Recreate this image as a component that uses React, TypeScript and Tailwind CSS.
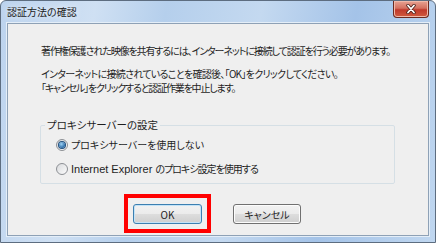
import type { ReactNode } from "react";

const jp = "font-['Noto_Sans_CJK_JP','Noto_Sans',sans-serif] [font-feature-settings:'palt']";

function Radio({ checked, children }: { checked?: boolean; children: ReactNode }) {
  return (
    <div className="flex h-[14px] items-center gap-[3px]">
      <span className="flex size-[12px] items-center justify-center rounded-full border border-[#8c8f94] bg-[linear-gradient(135deg,#d9dbdd,#fbfbfb)]">
        {checked && (
          <span className="size-[6px] rounded-full bg-[radial-gradient(circle_at_40%_35%,#9fd3f5,#2a6aa6_70%)] shadow-[0_0_0_1px_#1f4e7d]" />
        )}
      </span>
      <span className="whitespace-nowrap text-[10px] leading-[14px] text-[#1e1e1e]">{children}</span>
    </div>
  );
}

function WinButton({ isDefault, children }: { isDefault?: boolean; children: ReactNode }) {
  return (
    <button
      className={`flex h-[20px] w-full items-center justify-center rounded-[3px] border bg-[linear-gradient(#f2f2f2_0%,#ebebeb_50%,#dddddd_50%,#cfcfcf_100%)] text-[10px] text-[#1e1e1e] ${
        isDefault
          ? "border-[#3c7fb1] shadow-[inset_0_0_0_1px_#c3e3f7]"
          : "border-[#707070] shadow-[inset_0_0_0_1px_#fcfcfc]"
      }`}
      type="button"
    >
      {children}
    </button>
  );
}

function CloseButton() {
  return (
    <div className="flex h-[17px] w-[36px] items-center justify-center rounded-b-[4px] border border-t-0 border-[#6b2a20] bg-[linear-gradient(#e8a393_0%,#d4705f_45%,#c0392b_55%,#d05a3e_100%)] shadow-[inset_0_0_0_1px_#f0b8a8]">
      <svg viewBox="0 0 12 10" className="h-[10px] w-[12px]">
        <path d="M3 1.5 9 8.5M9 1.5 3 8.5" stroke="#4a1e17" strokeWidth="3.4" strokeLinecap="round" />
        <path d="M3 1.5 9 8.5M9 1.5 3 8.5" stroke="#ffffff" strokeWidth="1.8" strokeLinecap="round" />
      </svg>
    </div>
  );
}

export default function App() {
  return (
    <div
      className={`flex h-[243px] w-[436px] flex-col overflow-hidden rounded-t-[6px] border border-[#5d6d80] bg-[linear-gradient(100deg,#bcd3ee_0%,#cfe0f3_20%,#b5cfec_35%,#c4d9f0_55%,#a4c3e8_75%,#c0d7f0_100%)] ${jp}`}
    >
      <div className="flex h-[22px] shrink-0 items-start justify-between pl-[6px] pr-[6px]">
        <span className="pt-[4px] text-[10px] leading-[14px] text-[#1b1b1b] [text-shadow:0_0_6px_#ffffff]">
          認証方法の確認
        </span>
        <CloseButton />
      </div>
      <div className="mx-[6px] mb-[6px] flex flex-1 flex-col border border-[#8ea1b6] bg-[#efefef] shadow-[0_0_0_1px_#e4eef8]">
        <div className="whitespace-nowrap pl-[33px] pt-[20px] text-[10px] leading-[14px] text-[#1e1e1e]">
          <p className="tracking-[-1.1px]">著作権保護された映像を共有するには、インターネットに接続して認証を行う必要があります。</p>
          <p className="mt-[9px] tracking-[-0.7px]">インターネットに接続されていることを確認後、「OK」をクリックしてください。</p>
          <p className="tracking-[-1.2px]">「キャンセル」をクリックすると認証作業を中止します。</p>
        </div>
        <fieldset className="ml-[32px] mt-[23px] w-[355px] rounded-[2px] border border-[#d5dfe5] px-[4px] pb-[7px]">
          <legend className="px-[2px] text-[10.5px] leading-[14px] text-[#1e1e1e]">プロキシサーバーの設定</legend>
          <div className="ml-[11px] mt-[6px] flex flex-col gap-[10px]">
            <Radio checked>プロキシサーバーを使用しない</Radio>
            <Radio>
              <span className="font-['Liberation_Sans',sans-serif] text-[11px]">Internet Explorer </span>
              <span className="tracking-[-1px]">のプロキシ設定を使用する</span>
            </Radio>
          </div>
        </fieldset>
        <div className="ml-[125px] mt-[20px] flex gap-[31px]">
          <div className="relative w-[69px]">
            <WinButton isDefault>OK</WinButton>
            <div className="pointer-events-none absolute -inset-x-[9px] -bottom-[9px] -top-[10px] border-[4px] border-[#ff0000]" />
          </div>
          <div className="w-[68px]">
            <WinButton>キャンセル</WinButton>
          </div>
        </div>
      </div>
    </div>
  );
}
